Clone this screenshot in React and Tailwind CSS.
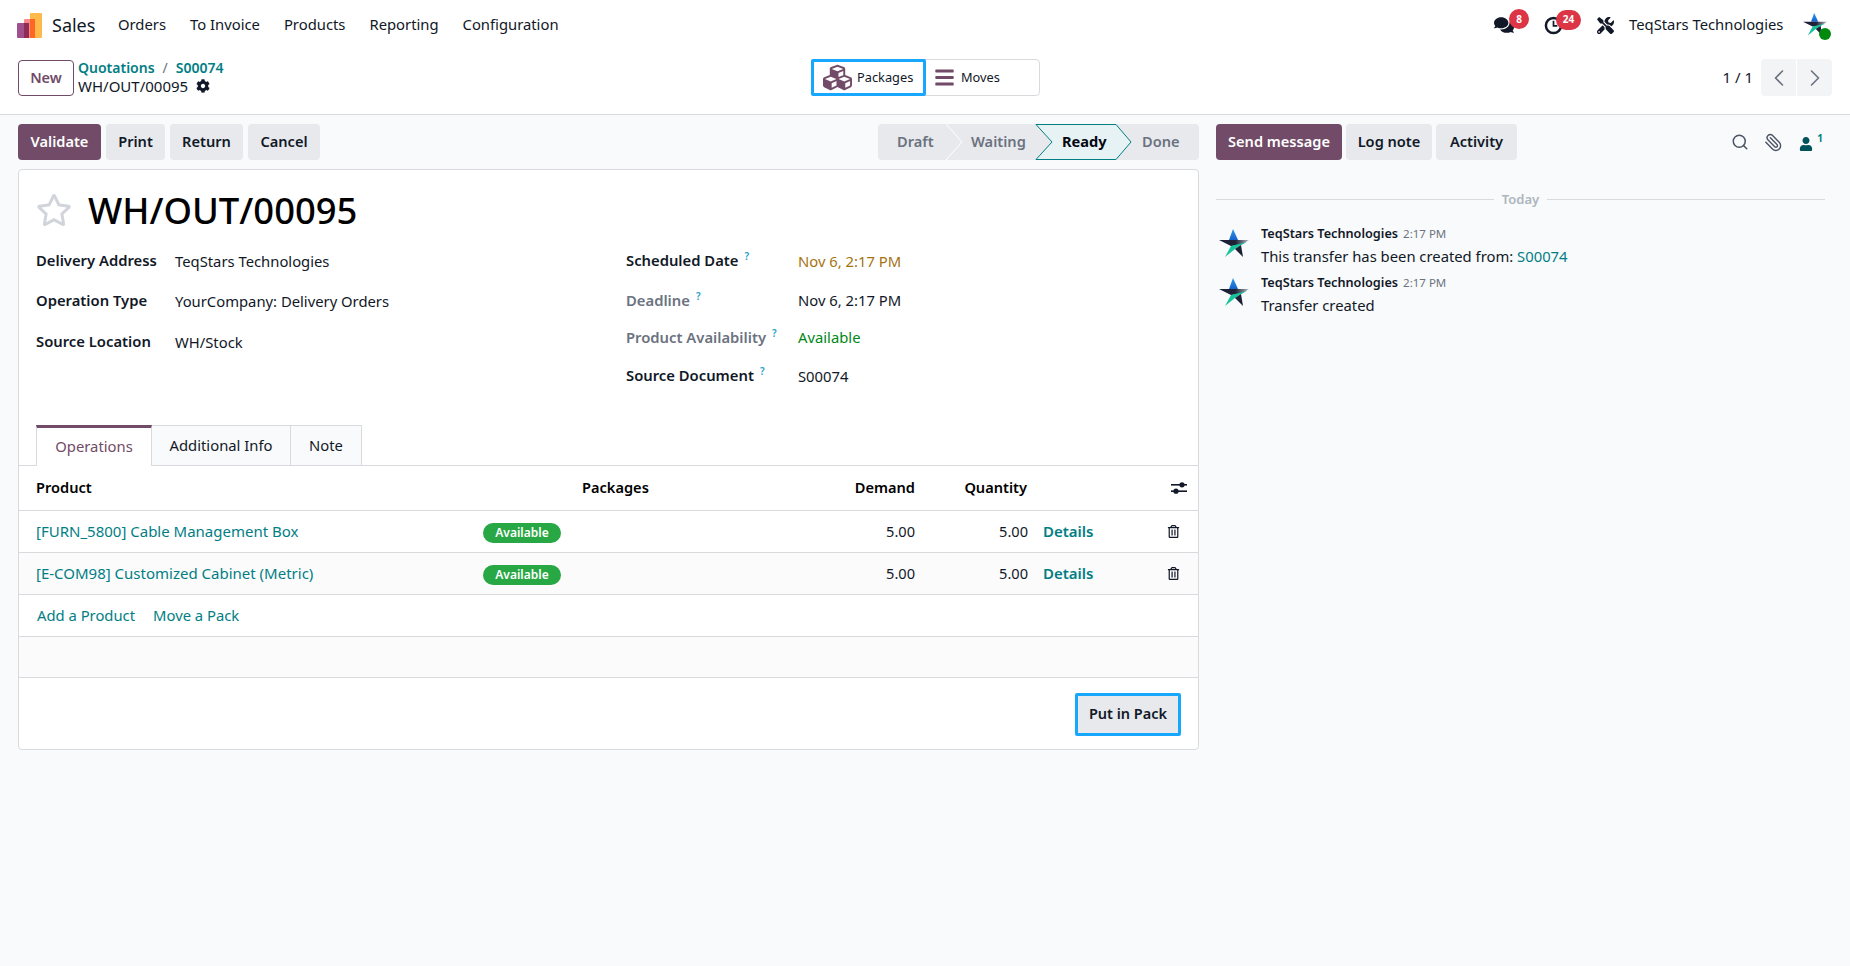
import React from "react";
import { FaCog, FaCubes, FaBars, FaComments, FaTools, FaUser, FaRegTrashAlt, FaRegStar } from "react-icons/fa";
import { ChevronLeft, ChevronRight, Search, Paperclip } from "lucide-react";

const Star = ({ className, id }) => (
  <svg viewBox="0 0 30 30" className={className}>
    <defs>
      <linearGradient id={id} x1="0" y1="0" x2="1" y2="0">
        <stop offset="0" stopColor="#1b1f38" />
        <stop offset="0.55" stopColor="#1f2238" />
        <stop offset="1" stopColor="#b6bac2" />
      </linearGradient>
      <linearGradient id={id + "b"} x1="0" y1="0" x2="0" y2="1">
        <stop offset="0" stopColor="#2f9bf0" />
        <stop offset="1" stopColor="#1560c8" />
      </linearGradient>
    </defs>
    <polygon points="14,0 10,11 19,11" fill={`url(#${id}b)`} />
    <polygon points="0,11 30,11 22,16 12,17" fill={`url(#${id})`} />
    <polygon points="12,17 28,13 22,16 16,20 6,28" fill="#16c49b" />
    <polygon points="16,20 22,16 24,28" fill="#1c2036" />
  </svg>
);

const Logo = () => (
  <svg viewBox="0 0 26 25" className="w-[26px] h-[25px]">
    <rect x="14" y="0" width="12" height="25" rx="1" fill="#fdb94a" />
    <rect x="8" y="6" width="11" height="19" rx="1" fill="#fb8a8a" />
    <rect x="14" y="6" width="5" height="19" fill="#ff6625" />
    <rect x="1" y="10" width="12" height="15" rx="1" fill="#a0508c" />
    <rect x="8" y="10" width="5" height="15" fill="#8f2d55" />
  </svg>
);

const Clock = () => (
  <svg viewBox="0 0 20 20" className="w-[19px] h-[19px]" fill="none" stroke="#111827">
    <circle cx="10" cy="10" r="8" strokeWidth="2.6" />
    <path d="M10 5v5.5h4" strokeWidth="1.8" />
  </svg>
);

const Adjust = () => (
  <svg viewBox="0 0 16 14" className="w-4 h-[14px]" fill="#111827">
    <rect x="0" y="3" width="16" height="1.6" />
    <circle cx="11" cy="3.8" r="2.6" />
    <rect x="0" y="9.4" width="16" height="1.6" />
    <circle cx="5" cy="10.2" r="2.6" />
  </svg>
);

const Btn = ({ children, w, primary }) => (
  <button className={`h-9 rounded text-[14.6px] font-semibold ${w} ${primary ? "bg-[#714b67] text-white" : "bg-[#e7e9ed] text-[#111827]"}`}>{children}</button>
);

const Help = () => <sup className="text-[10px] font-semibold text-[#2a9fc9] ml-[6px] -top-[6px]">?</sup>;

const Row = ({ product, alt }) => (
  <div className={`flex items-center border-b border-[#d8dadd] h-[42px] ${alt ? "bg-[#fbfbfc]" : ""}`}>
    <div className="w-[464px] pl-[17px] text-[#017e84] text-[15px] whitespace-nowrap">{product}</div>
    <div className="w-[78px] h-5 mt-[2px] rounded-full bg-[#28a745] text-white text-[12px] font-semibold flex items-center justify-center">Available</div>
    <div className="w-[354px] text-right text-[14.6px] text-[#111827]">5.00</div>
    <div className="w-[113px] text-right text-[14.6px] text-[#111827]">5.00</div>
    <div className="w-[139px] pl-[15px] text-[#017e84] text-[15px] font-semibold">Details</div>
    <FaRegTrashAlt className="text-[#111827] text-[13px]" />
  </div>
);

export default function App() {
  return (
    <div className="w-[1850px] h-[966px] bg-[#f9fafb] overflow-hidden flex flex-col text-[#111827] font-['Noto_Sans',sans-serif]">
      {/* navbar */}
      <div className="h-[50px] bg-white flex items-center pl-4 pr-[23px] shrink-0">
        <Logo />
        <span className="ml-[10px] text-[18px] w-[66px]">Sales</span>
        <nav className="flex text-[14.8px] gap-6 -mt-[2px]">
          <span>Orders</span><span>To Invoice</span><span>Products</span><span>Reporting</span><span>Configuration</span>
        </nav>
        <div className="ml-auto flex items-center">
          <div className="relative w-[50px]">
            <FaComments className="text-[20px]" />
            <span className="absolute left-[15px] -top-[6px] w-5 h-5 rounded-full bg-[#dc3545] text-white text-[10px] font-bold flex items-center justify-center">8</span>
          </div>
          <div className="relative w-[53px]">
            <Clock />
            <span className="absolute left-[12px] -top-[6px] w-[25px] h-5 rounded-full bg-[#dc3545] text-white text-[10px] font-bold flex items-center justify-center">24</span>
          </div>
          <FaTools className="text-[17px] mr-[15px]" />
          <span className="text-[14.8px] w-[174px] -mt-[2px]">TeqStars Technologies</span>
          <div className="relative w-6 h-6">
            <Star id="nav" className="w-6 h-6" />
            <span className="absolute -right-1 top-[15px] w-3 h-3 rounded-full bg-[#018a0e]" />
          </div>
        </div>
      </div>
      {/* control panel */}
      <div className="h-[65px] bg-white border-b border-[#d8dadd] flex items-center shrink-0 pl-[18px] pr-[18px] pb-[9px]">
        <button className="w-14 h-9 rounded border border-[#714b67] text-[#714b67] text-[14.5px] font-semibold">New</button>
        <div className="ml-[4px] w-[733px] leading-[19px] -mt-[2px]">
          <div className="text-[14px] font-semibold text-[#017e84] flex gap-[8px]"><span>Quotations</span><span className="text-[#6b7280] font-normal">/</span><span>S00074</span></div>
          <div className="text-[15px] flex items-center gap-[8px]">WH/OUT/00095 <FaCog className="text-[14px]" /></div>
        </div>
        <div className="flex h-[37px] w-[229px] border border-[#d8dadd] rounded text-[12.8px]">
          <div className="w-[115px] -ml-px -my-px border-[3px] border-[#17a7ff] rounded-[2px] flex items-center pl-[9px] gap-[5px] bg-white">
            <FaCubes className="text-[29px] text-[#714b67]" />Packages
          </div>
          <div className="flex items-center pl-[8px] gap-[6px]">
            <FaBars className="text-[21px] text-[#714b67]" />Moves
          </div>
        </div>
        <span className="ml-auto text-[15px] mr-[8px]">1 / 1</span>
        <div className="flex gap-px h-[37px]">
          <button className="w-[35px] bg-[#f3f4f6] rounded-l flex items-center justify-center text-[#6b7280]"><ChevronLeft size={28} strokeWidth={1.4} /></button>
          <button className="w-[35px] bg-[#f3f4f6] rounded-r flex items-center justify-center text-[#6b7280]"><ChevronRight size={28} strokeWidth={1.4} /></button>
        </div>
      </div>
      {/* content */}
      <div className="flex flex-1 min-h-0">
        <div className="w-[1199px] pl-[18px] shrink-0 pt-[9px]">
          <div className="flex items-center h-9">
            <div className="flex gap-[5px]">
              <Btn w="w-[83px]" primary>Validate</Btn>
              <Btn w="w-[59px]">Print</Btn>
              <Btn w="w-[73px]">Return</Btn>
              <Btn w="w-[72px]">Cancel</Btn>
            </div>
            <div className="ml-auto relative w-[321px] h-9 bg-[#e7e9ed] rounded flex items-center text-[14.6px] font-semibold text-[#6b7280]">
              <svg viewBox="0 0 321 36" className="absolute left-0 top-0 w-[321px] h-9">
                <polyline points="68,0 84,18 68,36" fill="none" stroke="#fff" />
                <polygon points="158,0.5 238,0.5 253,18 238,35.5 158,35.5 174,18" fill="#e6f2f3" stroke="#017e84" />
              </svg>
              <span className="relative w-[93px] pl-[19px]">Draft</span>
              <span className="relative w-[91px]">Waiting</span>
              <span className="relative w-[80px] text-[#030712] font-bold">Ready</span>
              <span className="relative">Done</span>
            </div>
          </div>
          <div className="mt-[9px] h-[581px] bg-white border border-[#d8dadd] rounded flex flex-col">
            <div className="h-[295px] pl-[17px] pr-4 shrink-0 relative">
              <div className="flex items-center h-[67px] pt-[13px]">
                <FaRegStar className="text-[36px] text-[#d1d5db]" />
                <h1 className="ml-[16px] text-[36.4px] font-medium text-black">WH/OUT/00095</h1>
              </div>
              <div className="flex mt-[8px]">
                <div className="w-[590px] text-[14.8px]">
                  <div className="flex h-10 pt-[4px]"><span className="w-[139px] font-semibold">Delivery Address</span><span className="mt-px">TeqStars Technologies</span></div>
                  <div className="flex h-10 pt-[4px]"><span className="w-[139px] font-semibold">Operation Type</span><span className="mt-px">YourCompany: Delivery Orders</span></div>
                  <div className="flex h-10 pt-[5px]"><span className="w-[139px] font-semibold">Source Location</span><span className="mt-px">WH/Stock</span></div>
                </div>
                <div className="text-[14.8px]">
                  <div className="flex h-10 pt-[4px]"><span className="w-[172px] font-semibold">Scheduled Date<Help /></span><span className="text-[#a5730f] mt-px">Nov 6, 2:17 PM</span></div>
                  <div className="flex h-[38px] pt-[4px]"><span className="w-[172px] font-semibold text-[#6b7280]">Deadline<Help /></span><span>Nov 6, 2:17 PM</span></div>
                  <div className="flex h-[37px] pt-[3px]"><span className="w-[172px] font-semibold text-[#6b7280]">Product Availability<Help /></span><span className="text-[#008818]">Available</span></div>
                  <div className="flex h-[37px] pt-[4px]"><span className="w-[172px] font-semibold">Source Document<Help /></span><span className="mt-px">S00074</span></div>
                </div>
              </div>
              <div className="absolute left-[17px] bottom-0 flex h-[41px] text-[14.8px] translate-y-px">
                <div className="w-[116px] pb-[2px] border-x border-[#d8dadd] border-t-[3px] border-t-[#714b67] bg-white text-[#714b67] flex items-center justify-center">Operations</div>
                <div className="w-[139px] border-t border-r border-b border-[#d8dadd] bg-[#f9fafb] flex items-center justify-center">Additional Info</div>
                <div className="w-[71px] border-t border-r border-b border-[#d8dadd] bg-[#f9fafb] flex items-center justify-center">Note</div>
              </div>
            </div>
            <div className="border-t border-[#d8dadd]">
              <div className="flex items-center border-b border-[#d8dadd] h-[45px] text-[14.6px] font-semibold text-black">
                <div className="w-[563px] pl-[17px]">Product</div>
                <div className="w-[202px]">Packages</div>
                <div className="w-[131px] text-right">Demand</div>
                <div className="w-[112px] text-right">Quantity</div>
                <div className="w-[160px] flex justify-end"><Adjust /></div>
              </div>
              <Row product="[FURN_5800] Cable Management Box" />
              <Row product="[E-COM98] Customized Cabinet (Metric)" alt />
              <div className="flex items-center border-b border-[#d8dadd] h-[42px] pl-[18px] gap-[18px] text-[14.8px] text-[#017e84]">
                <span>Add a Product</span><span>Move a Pack</span>
              </div>
              <div className="h-[41px] bg-[#fbfbfc] border-b border-[#d8dadd]" />
            </div>
            <div className="flex-1 flex items-start justify-end pr-[17px] pt-[15px]">
              <button className="w-[106px] h-[43px] pb-[2px] border-[3px] border-[#17a7ff] bg-[#e7e9ed] rounded-[2px] text-[14.5px] font-semibold">Put in Pack</button>
            </div>
          </div>
        </div>
        {/* chatter */}
        <div className="flex-1 pl-[17px] pr-[25px] pt-[9px]">
          <div className="flex items-center h-9">
            <div className="flex gap-[4px]">
              <Btn w="w-[126px]" primary>Send message</Btn>
              <Btn w="w-[86px]">Log note</Btn>
              <Btn w="w-[81px]">Activity</Btn>
            </div>
            <div className="ml-auto flex items-center text-[#4b5563]">
              <Search size={18} strokeWidth={2} />
              <Paperclip size={19} strokeWidth={1.8} className="ml-[15px] -scale-x-100" />
              <div className="ml-[16px] mr-[2px] flex text-[#00535a]"><FaUser className="text-[14px] mt-[3px]" /><span className="text-[10px] font-bold ml-1 -mt-[3px] text-[#017e84]">1</span></div>
            </div>
          </div>
          <div className="flex items-center mt-[30px] text-[13px] font-semibold text-[#adb5bd]">
            <div className="flex-1 h-px bg-[#d8dadd]" /><span className="px-2">Today</span><div className="flex-1 h-px bg-[#d8dadd]" />
          </div>
          <div className="mt-[13px] flex flex-col gap-[4px]">
            <div className="flex">
              <Star id="m1" className="w-[30px] h-[30px] ml-[3px] mt-[6px]" />
              <div className="ml-3">
                <div className="text-[12.7px] font-semibold flex items-baseline gap-[5px] leading-[20px]">TeqStars Technologies <span className="text-[11.5px] font-normal text-[#6b7280]">2:17 PM</span></div>
                <div className="text-[14.8px] leading-[23px] mt-px">This transfer has been created from: <span className="text-[#017e84]">S00074</span></div>
              </div>
            </div>
            <div className="flex">
              <Star id="m2" className="w-[30px] h-[30px] ml-[3px] mt-[6px]" />
              <div className="ml-3">
                <div className="text-[12.7px] font-semibold flex items-baseline gap-[5px] leading-[20px]">TeqStars Technologies <span className="text-[11.5px] font-normal text-[#6b7280]">2:17 PM</span></div>
                <div className="text-[14.8px] leading-[23px] mt-px">Transfer created</div>
              </div>
            </div>
          </div>
        </div>
      </div>
    </div>
  );
}
